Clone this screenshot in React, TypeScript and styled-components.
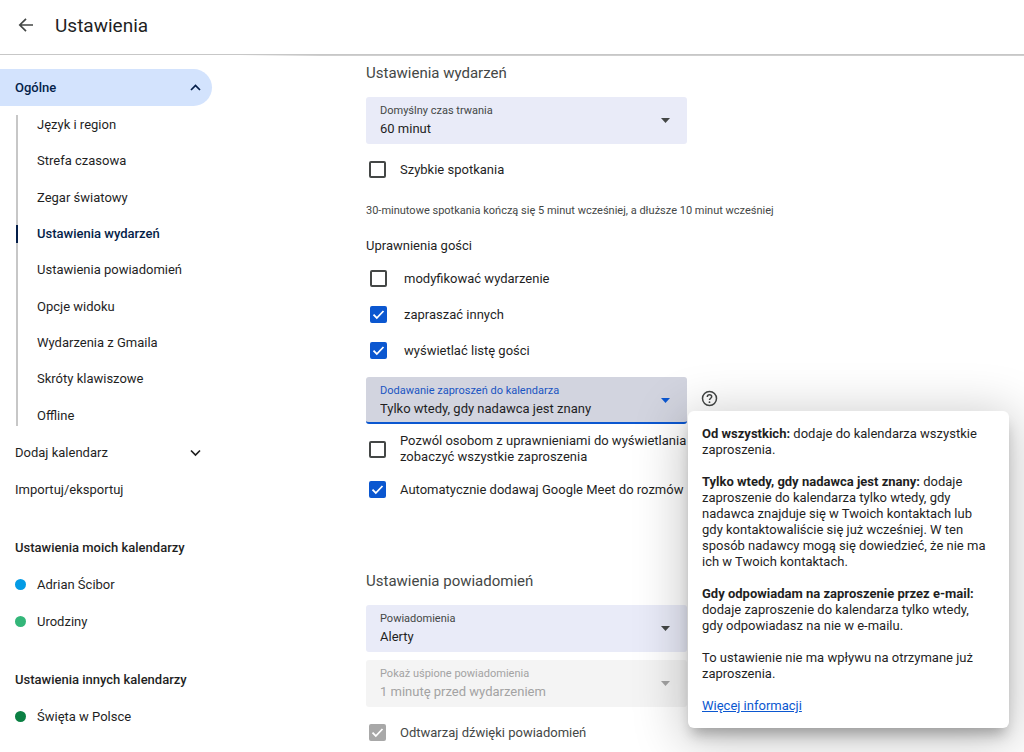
import React from 'react';
import styled, { createGlobalStyle, css } from 'styled-components';

const Global = createGlobalStyle`
  *, *::before, *::after { box-sizing: border-box; }
  body {
    margin: 0;
    background: #fff;
    color: #1f1f1f;
    font: 400 13px/16px Roboto, "Liberation Sans", sans-serif;
  }
  button, select, input { font: inherit; color: inherit; margin: 0; }
  ul { list-style: none; margin: 0; padding: 0; }
  h1, h2, h3, p { margin: 0; font-weight: 400; }
`;

const Page = styled.div`
  display: flex;
  flex-direction: column;
  min-height: 100vh;
  overflow: hidden;
`;

const Header = styled.header`
  display: flex;
  align-items: center;
  gap: 20px;
  height: 55px;
  padding: 0 16px 2px;
  border-bottom: 1px solid #c7c7c7;
`;

const BackButton = styled.button`
  display: flex;
  padding: 0;
  border: 0;
  background: none;
  color: #444746;
  cursor: pointer;
`;

const Title = styled.h1`
  font-size: 19px;
  line-height: 24px;
`;

const Body = styled.div`
  display: flex;
  flex: 1;
`;

const Sidebar = styled.nav`
  flex: 0 0 240px;
  padding: 14px 28px 0 0;
`;

const GroupButton = styled.button<{ $active?: boolean }>`
  display: flex;
  align-items: center;
  justify-content: space-between;
  width: 100%;
  height: 37px;
  padding: 0 10px 0 15px;
  border: 0;
  border-radius: 0 19px 19px 0;
  background: ${p => (p.$active ? '#d3e3fd' : 'none')};
  color: ${p => (p.$active ? '#041e49' : '#1f1f1f')};
  font-weight: ${p => (p.$active ? 500 : 400)};
  text-align: left;
  cursor: pointer;
`;

const SubList = styled.ul`
  position: relative;
  display: grid;
  grid-auto-rows: 1fr;
  height: 328px;
  padding-top: 1px;
  &::before {
    content: '';
    position: absolute;
    left: 16px;
    top: 9px;
    bottom: 8px;
    width: 2px;
    background: #c7c7c7;
  }
`;

const SubItem = styled.li`
  display: flex;
  align-items: center;
`;

const NavLink = styled.a<{ $active?: boolean }>`
  position: relative;
  flex: 1;
  padding: 1px 0 1px 37px;
  color: inherit;
  text-decoration: none;
  ${p => p.$active && css`
    color: #041e49;
    font-weight: 500;
    &::before {
      content: '';
      position: absolute;
      left: 16px;
      top: 0;
      bottom: 0;
      width: 2px;
      background: #041e49;
    }
  `}
`;

const PlainLink = styled.a`
  display: flex;
  align-items: center;
  height: 37px;
  padding-left: 15px;
  color: inherit;
  text-decoration: none;
`;

const CalendarHeading = styled.h2`
  display: flex;
  align-items: center;
  height: 36px;
  margin-top: 22px;
  padding-left: 15px;
  font-size: 13px;
  line-height: 16px;
  font-weight: 500;
`;

const CalendarLink = styled(PlainLink)`
  gap: 11px;
`;

const Dot = styled.span<{ $color: string }>`
  width: 11px;
  height: 11px;
  border-radius: 50%;
  background: ${p => p.$color};
`;

const Main = styled.main`
  flex: 1;
  min-width: 0;
  padding: 8px 16px 0 126px;
  background: linear-gradient(to right, transparent, #cfcfcf 80px) top / 100% 1px no-repeat;
`;

const Section = styled.section`
  & + & { margin-top: 73px; }
`;

const SectionTitle = styled.h2`
  margin-bottom: 14px;
  font-size: 15px;
  line-height: 20px;
  color: #444746;
`;

const FieldRow = styled.div`
  display: flex;
  align-items: center;
  gap: 14px;
`;

const Field = styled.div<{ $tone?: 'focused' | 'disabled' }>`
  position: relative;
  display: flex;
  flex-direction: column;
  width: 321px;
  height: 47px;
  padding-top: 6px;
  border-radius: 3px;
  background: #e9ebf8;
  color: #444746;
  ${p => p.$tone === 'focused' && css`
    background: #d2d4df;
    color: #1a55c2;
    border-bottom: 2px solid #0b57d0;
  `}
  ${p => p.$tone === 'disabled' && css`
    background: #f4f4f4;
    color: #a3a3a3;
  `}
`;

const FieldLabel = styled.label`
  padding-left: 14px;
  font-size: 11px;
  line-height: 16px;
`;

const Select = styled.select`
  width: 100%;
  height: 20px;
  padding: 0 40px 0 14px;
  border: 0;
  outline: 0;
  appearance: none;
  background: none;
  color: #1f1f1f;
  opacity: 1;
  &:disabled { color: #a3a3a3; }
`;

const Caret = styled.svg`
  position: absolute;
  right: 17px;
  top: 21px;
  pointer-events: none;
`;

const CheckRow = styled.label<{ $indent?: boolean; $muted?: boolean }>`
  display: flex;
  align-items: center;
  width: 321px;
  gap: ${p => (p.$indent ? 17 : 14)}px;
  padding-left: ${p => (p.$indent ? 4 : 3)}px;
  color: ${p => (p.$muted ? '#444746' : 'inherit')};
`;

const CheckMark = styled.span`
  display: grid;
  flex: none;
  & > * { grid-area: 1 / 1; }
  svg { pointer-events: none; }
`;

const CheckInput = styled.input`
  appearance: none;
  width: 17px;
  height: 17px;
  border: 2px solid #444746;
  border-radius: 2px;
  &:checked { background: #0b57d0; border-color: #0b57d0; }
  &:disabled { background: #a8a8a8; border-color: #a8a8a8; }
`;

const Note = styled.p`
  margin: 25px 0 19px;
  font-size: 11px;
  color: #444746;
`;

const Fieldset = styled.fieldset`
  display: flex;
  flex-direction: column;
  gap: 19px;
  min-width: 0;
  margin: 0 0 18px;
  padding: 0;
  border: 0;
`;

const Legend = styled.legend`
  margin-bottom: 16px;
  padding: 0;
`;

const QuickRow = styled.div`
  margin-top: 17px;
`;

const OptionStack = styled.div`
  display: flex;
  flex-direction: column;
  gap: 16px;
  margin-top: 9px;
`;

const HelpAnchor = styled.div`
  position: relative;
  display: flex;
  padding-bottom: 4px;
`;

const HelpButton = styled.button`
  display: flex;
  padding: 0;
  border: 0;
  background: none;
  color: #444746;
`;

const Tooltip = styled.div`
  position: absolute;
  z-index: 2;
  left: -13px;
  top: 21px;
  display: flex;
  flex-direction: column;
  gap: 16px;
  width: 321px;
  padding: 15px 20px 14px 14px;
  border-radius: 6px;
  background: #fff;
  box-shadow: 0 10px 14px -4px rgba(0, 0, 0, 0.28), 0 8px 50px 6px rgba(0, 0, 0, 0.22);
  a { color: #0b57d0; }
  strong { font-weight: 700; }
`;

const FieldStack = styled.div`
  display: flex;
  flex-direction: column;
  gap: 8px;
`;

function Chevron({ up }: { up?: boolean }) {
  return (
    <svg width="13" height="13" viewBox="0 0 13 13" fill="none" stroke="currentColor" strokeWidth="1.7">
      <path d={up ? 'M2 9 6.500 4.500 11 9' : 'M2 4.500 6.500 9 11 4.500'} />
    </svg>
  );
}

function SelectField(props: { id: string; label: string; value: string; tone?: 'focused' | 'disabled' }) {
  const caret = props.tone === 'focused' ? '#0b57d0' : props.tone === 'disabled' ? '#a3a3a3' : '#444746';
  return (
    <Field $tone={props.tone}>
      <FieldLabel htmlFor={props.id}>{props.label}</FieldLabel>
      <Select id={props.id} disabled={props.tone === 'disabled'}>
        <option>{props.value}</option>
      </Select>
      <Caret width="9" height="5" viewBox="0 0 9 5"><path d="M0 0h9L4.500 5z" fill={caret} /></Caret>
    </Field>
  );
}

function Check(props: { label: string; checked?: boolean; disabled?: boolean; indent?: boolean }) {
  return (
    <CheckRow $indent={props.indent} $muted={props.disabled}>
      <CheckMark>
        <CheckInput type="checkbox" defaultChecked={props.checked} disabled={props.disabled} />
        {props.checked && (
          <svg width="17" height="17" viewBox="0 0 17 17" fill="none" stroke="#fff" strokeWidth="1.8">
            <path d="M3.500 8.700 6.800 12 13.500 5" />
          </svg>
        )}
      </CheckMark>
      <span>{props.label}</span>
    </CheckRow>
  );
}

const generalItems = [
  'Język i region', 'Strefa czasowa', 'Zegar światowy', 'Ustawienia wydarzeń', 'Ustawienia powiadomień',
  'Opcje widoku', 'Wydarzenia z Gmaila', 'Skróty klawiszowe', 'Offline',
];

export default function App() {
  return (
    <Page>
      <Global />
      <Header>
        <BackButton aria-label="Wstecz">
          <svg width="19" height="18" viewBox="0 0 19 18" fill="none" stroke="currentColor" strokeWidth="1.7">
            <path d="M17 8H4M10 1.800 3.800 8l6.200 6.200" />
          </svg>
        </BackButton>
        <Title>Ustawienia</Title>
      </Header>
      <Body>
        <Sidebar>
          <GroupButton $active aria-expanded="true">Ogólne<Chevron up /></GroupButton>
          <SubList>
            {generalItems.map(item => (
              <SubItem key={item}>
                <NavLink href="#" $active={item === 'Ustawienia wydarzeń'}>{item}</NavLink>
              </SubItem>
            ))}
          </SubList>
          <GroupButton aria-expanded="false">Dodaj kalendarz<Chevron /></GroupButton>
          <PlainLink href="#">Importuj/eksportuj</PlainLink>
          <CalendarHeading>Ustawienia moich kalendarzy</CalendarHeading>
          <CalendarLink href="#"><Dot $color="#039be5" />Adrian Ścibor</CalendarLink>
          <CalendarLink href="#"><Dot $color="#33b679" />Urodziny</CalendarLink>
          <CalendarHeading>Ustawienia innych kalendarzy</CalendarHeading>
          <CalendarLink href="#"><Dot $color="#0b8043" />Święta w Polsce</CalendarLink>
        </Sidebar>
        <Main>
          <Section>
            <SectionTitle>Ustawienia wydarzeń</SectionTitle>
            <SelectField id="duration" label="Domyślny czas trwania" value="60 minut" />
            <QuickRow><Check label="Szybkie spotkania" /></QuickRow>
            <Note>30-minutowe spotkania kończą się 5 minut wcześniej, a dłuższe 10 minut wcześniej</Note>
            <Fieldset>
              <Legend>Uprawnienia gości</Legend>
              <Check indent label="modyfikować wydarzenie" />
              <Check indent checked label="zapraszać innych" />
              <Check indent checked label="wyświetlać listę gości" />
            </Fieldset>
            <FieldRow>
              <SelectField id="invitations" tone="focused" label="Dodawanie zaproszeń do kalendarza" value="Tylko wtedy, gdy nadawca jest znany" />
              <HelpAnchor>
                <HelpButton aria-label="Pomoc">
                  <svg width="17" height="17" viewBox="0 0 17 17" fill="none" stroke="currentColor" strokeWidth="1.5">
                    <circle cx="8.500" cy="8.500" r="7" />
                    <path d="M6.300 6.900c0-1.300 1-2.200 2.200-2.200s2.200.9 2.200 2c0 1.500-2.200 1.700-2.200 3.400" />
                    <circle cx="8.500" cy="12.200" r=".9" fill="currentColor" stroke="none" />
                  </svg>
                </HelpButton>
                <Tooltip role="tooltip">
                  <p><strong>Od wszystkich:</strong> dodaje do kalendarza wszystkie zaproszenia.</p>
                  <p><strong>Tylko wtedy, gdy nadawca jest znany:</strong> dodaje zaproszenie do kalendarza tylko wtedy, gdy nadawca znajduje się w Twoich kontaktach lub gdy kontaktowaliście się już wcześniej. W ten sposób nadawcy mogą się dowiedzieć, że nie ma ich w Twoich kontaktach.</p>
                  <p><strong>Gdy odpowiadam na zaproszenie przez e-mail:</strong> dodaje zaproszenie do kalendarza tylko wtedy, gdy odpowiadasz na nie w e-mailu.</p>
                  <p>To ustawienie nie ma wpływu na otrzymane już zaproszenia.</p>
                  <p><a href="#">Więcej informacji</a></p>
                </Tooltip>
              </HelpAnchor>
            </FieldRow>
            <OptionStack>
              <Check label="Pozwól osobom z uprawnieniami do wyświetlania zobaczyć wszystkie zaproszenia" />
              <Check checked label="Automatycznie dodawaj Google Meet do rozmów" />
            </OptionStack>
          </Section>
          <Section>
            <SectionTitle>Ustawienia powiadomień</SectionTitle>
            <FieldStack>
              <SelectField id="notifications" label="Powiadomienia" value="Alerty" />
              <SelectField id="snoozed" tone="disabled" label="Pokaż uśpione powiadomienia" value="1 minutę przed wydarzeniem" />
            </FieldStack>
            <QuickRow><Check checked disabled label="Odtwarzaj dźwięki powiadomień" /></QuickRow>
          </Section>
        </Main>
      </Body>
    </Page>
  );
}
